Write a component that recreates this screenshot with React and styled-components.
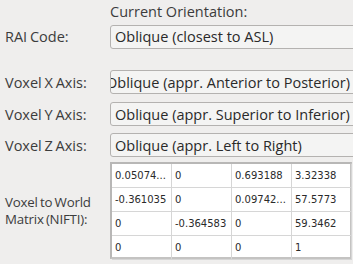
import React from 'react';
import styled, { createGlobalStyle } from 'styled-components';

const GlobalStyle = createGlobalStyle`
  html, body {
    margin: 0;
    padding: 0;
    background: #efeeed;
    overflow: hidden;
  }
  body {
    font-family: 'Open Sans', 'Liberation Sans', sans-serif;
    color: #3c3c3c;
  }
`;

const Panel = styled.div`
  width: 353px;
  height: 264px;
  display: grid;
  grid-template-columns: 110px 260px;
  grid-template-rows: 21px 25px 21px 24px 8px 24px 7px 24px 5px 97px;
  padding-top: 3px;
  align-items: center;
`;

const Heading = styled.div`
  grid-column: 2;
  font-size: 14.5px;
  line-height: 18px;
  align-self: start;
`;

const Label = styled.div`
  grid-column: 1;
  grid-row: ${props => props.row};
  padding-left: 5px;
  font-size: ${props => (props.compact ? '13.3px' : '14.5px')};
  letter-spacing: ${props => (props.compact ? '-0.2px' : '0')};
  word-spacing: -1px;
  line-height: 17px;
  white-space: nowrap;
`;

const Combo = styled.div`
  grid-column: 2;
  grid-row: ${props => props.row};
  height: 24px;
  box-sizing: border-box;
  border: 1px solid #b4b2b0;
  border-radius: 3px;
  background: #f4f4f3;
  overflow: hidden;
  white-space: nowrap;
  display: flex;
  align-items: center;
  font-size: 14.5px;
  color: #2a2a2a;
`;

const ComboText = styled.span`
  padding-left: ${props => (props.shift ? '0' : '4px')};
  margin-left: ${props => (props.shift ? '-5px' : '0')};
`;

const Table = styled.div`
  grid-column: 2;
  grid-row: 10;
  width: 242px;
  height: 97px;
  box-sizing: border-box;
  border: 2px solid #c4c3c2;
  border-top-color: #b8b7b6;
  border-left-color: #b8b7b6;
  background: #ffffff;
  display: grid;
  grid-template-columns: repeat(4, 60px);
  grid-auto-rows: 24px;
  align-self: start;
`;

const Cell = styled.div`
  border-right: 1px solid #d6d6d6;
  border-bottom: 1px solid #d6d6d6;
  display: flex;
  align-items: center;
  padding-left: 3px;
  font-family: 'DejaVu Sans', sans-serif;
  font-size: 10px;
  color: #2a2a2a;
  white-space: nowrap;
  overflow: hidden;
`;

const matrix = [
  ['0.05074...', '0', '0.693188', '3.32338'],
  ['-0.361035', '0', '0.09742...', '57.5773'],
  ['0', '-0.364583', '0', '59.3462'],
  ['0', '0', '0', '1'],
];

export default function App() {
  return (
    <>
      <GlobalStyle />
      <Panel>
        <Heading>Current Orientation:</Heading>
        <Label row={2}>RAI Code:</Label>
        <Combo row={2}>
          <ComboText>Oblique (closest to ASL)</ComboText>
        </Combo>
        <Label row={4}>Voxel X Axis:</Label>
        <Combo row={4}>
          <ComboText shift>Oblique (appr. Anterior to Posterior)</ComboText>
        </Combo>
        <Label row={6}>Voxel Y Axis:</Label>
        <Combo row={6}>
          <ComboText>Oblique (appr. Superior to Inferior)</ComboText>
        </Combo>
        <Label row={8}>Voxel Z Axis:</Label>
        <Combo row={8}>
          <ComboText>Oblique (appr. Left to Right)</ComboText>
        </Combo>
        <Label row={10} compact>
          Voxel to World
          <br />
          Matrix (NIFTI):
        </Label>
        <Table>
          {matrix.flat().map((v, i) => (
            <Cell key={i}>{v}</Cell>
          ))}
        </Table>
      </Panel>
    </>
  );
}
